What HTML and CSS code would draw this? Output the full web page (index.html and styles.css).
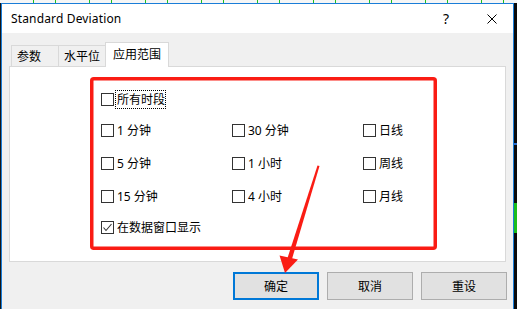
FILE: index.html
```html
<!DOCTYPE html>
<html>
<head>
<meta charset="utf-8">
<link rel="stylesheet" href="styles.css">
</head>
<body>
<div class="desk-top"></div>
<div class="desk-row">
  <div class="desk-left"></div>
  <div class="window">
    <div class="titlebar">
      <span class="title">Standard Deviation</span>
      <span class="tb-btn help">?</span>
      <span class="tb-btn close">
        <svg width="10" height="10" viewBox="0 0 10 10"><path d="M0.5 0.5 L9.5 9.5 M9.5 0.5 L0.5 9.5" stroke="#000" stroke-width="1" fill="none"/></svg>
      </span>
    </div>
    <div class="dlg-body">
      <div class="tabs">
        <div class="tab t1">参数</div>
        <div class="tab t2">水平位</div>
        <div class="tab sel">应用范围</div>
      </div>
      <div class="panel">
        <div class="row first">
          <span class="cb"></span><span class="lbl focus">所有时段</span>
        </div>
        <div class="grid">
          <div class="row"><span class="cb"></span><span class="lbl">1 分钟</span></div>
          <div class="row"><span class="cb"></span><span class="lbl">30 分钟</span></div>
          <div class="row"><span class="cb"></span><span class="lbl">日线</span></div>
          <div class="row"><span class="cb"></span><span class="lbl">5 分钟</span></div>
          <div class="row"><span class="cb"></span><span class="lbl">1 小时</span></div>
          <div class="row"><span class="cb"></span><span class="lbl">周线</span></div>
          <div class="row"><span class="cb"></span><span class="lbl">15 分钟</span></div>
          <div class="row"><span class="cb"></span><span class="lbl">4 小时</span></div>
          <div class="row"><span class="cb"></span><span class="lbl">月线</span></div>
        </div>
        <div class="row last">
          <span class="cb checked"><svg width="11" height="11" viewBox="0 0 11 11"><path d="M1.5 5.5 L4 8.5 L9.5 2" stroke="#333" stroke-width="1.1" fill="none"/></svg></span><span class="lbl">在数据窗口显示</span>
        </div>
      </div>
      <div class="buttons">
        <div class="btn default">确定</div>
        <div class="btn">取消</div>
        <div class="btn">重设</div>
      </div>
    </div>
  </div>
  <div class="desk-right"></div>
</div>
<svg class="annot" width="517" height="309" viewBox="0 0 517 309">
  <rect x="91.75" y="78.75" width="343.5" height="169.5" rx="2" ry="2" fill="none" stroke="#fa1c14" stroke-width="3.5"/>
  <polygon points="317.5,165.5 319.5,166 292,259 287.5,258" fill="#fa1c14"/>
  <polygon points="279.5,255.5 298,259.5 285,273" fill="#fa1c14"/>
</svg>
</body>
</html>
```
FILE: styles.css
```css
html, body {
  margin: 0;
  padding: 0;
}
body {
  width: 517px;
  height: 309px;
  overflow: hidden;
  position: relative;
  background: #0b0b0b;
  font-family: "Noto Sans", "Noto Sans CJK SC", sans-serif;
  font-size: 12px;
  color: #000;
}
.desk-top {
  height: 3px;
  background: repeating-linear-gradient(90deg, #f6f6f6 0 33px, #20c020 33px 34px, #f6f6f6 34px 55px, #20c020 55px 56px);
}
.desk-row {
  display: flex;
  height: 306px;
}
.desk-left {
  width: 1px;
  background: #161616;
}
.desk-right {
  flex: 1;
  background: linear-gradient(180deg, #0a0a0a 0 140px, #2b6fd0 140px 142px, #0a0a0a 142px 200px, #1bbd1b 200px 230px, #0a0a0a 230px);
}
.window {
  width: 513px;
  box-sizing: border-box;
  border: 1px solid #1a7dd8;
  border-bottom: none;
  background: #f0f0f0;
  display: flex;
  flex-direction: column;
}
.titlebar {
  height: 29px;
  background: #fff;
  display: flex;
  align-items: center;
}
.title {
  padding-left: 9px;
  font-size: 12px;
  letter-spacing: 0.15px;
  flex: 1;
}
.tb-btn {
  display: flex;
  align-items: center;
  justify-content: center;
  height: 29px;
}
.help {
  width: 46px;
  font-size: 14px;
  padding-bottom: 1px;
  box-sizing: border-box;
}
.close {
  width: 44px;
  padding-left: 2px;
  box-sizing: border-box;
}
.close svg {
  display: block;
}
.dlg-body {
  padding: 9px 7px 0 7px;
}
.tabs {
  display: flex;
  align-items: flex-end;
  height: 24px;
  padding-left: 2px;
}
.tab {
  box-sizing: border-box;
  height: 21px;
  border: 1px solid #d9d9d9;
  border-bottom: none;
  background: #f0f0f0;
  padding-left: 5px;
  display: flex;
  align-items: center;
}
.t1 {
  width: 48px;
}
.t2 {
  width: 49px;
  margin-left: -1px;
}
.sel {
  width: 64px;
  height: 25px;
  margin-left: -2px;
  margin-bottom: -1px;
  padding-left: 7px;
  padding-bottom: 2px;
  background: #fff;
  position: relative;
  z-index: 1;
}
.panel {
  box-sizing: border-box;
  height: 196px;
  border: 1px solid #d9d9d9;
  background: #fff;
  padding: 26px 0 0 91px;
}
.row {
  display: flex;
  align-items: center;
  height: 13px;
}
.cb {
  box-sizing: border-box;
  width: 13px;
  height: 13px;
  border: 1px solid #333;
  background: #fff;
  flex: none;
  display: flex;
  align-items: center;
  justify-content: center;
}
.cb svg {
  display: block;
}
.lbl {
  margin-left: 3px;
  white-space: nowrap;
  line-height: 15px;
}
.focus {
  margin-left: 2px;
  padding: 1px 0 1px 1px;
  outline: 1px dotted #000;
  outline-offset: 0;
}
.grid {
  display: grid;
  grid-template-columns: 131px 131px auto;
  row-gap: 20px;
  margin-top: 18px;
}
.last {
  margin-top: 18px;
}
.buttons {
  display: flex;
  justify-content: flex-end;
  gap: 8px;
  margin-top: 10px;
  margin-right: -1px;
}
.btn {
  box-sizing: border-box;
  width: 86px;
  height: 28px;
  border: 1px solid #adadad;
  background: #e1e1e1;
  display: flex;
  align-items: center;
  justify-content: center;
}
.btn.default {
  border: 2px solid #0078d7;
}
.annot {
  position: absolute;
  left: 0;
  top: 0;
  pointer-events: none;
}
```
